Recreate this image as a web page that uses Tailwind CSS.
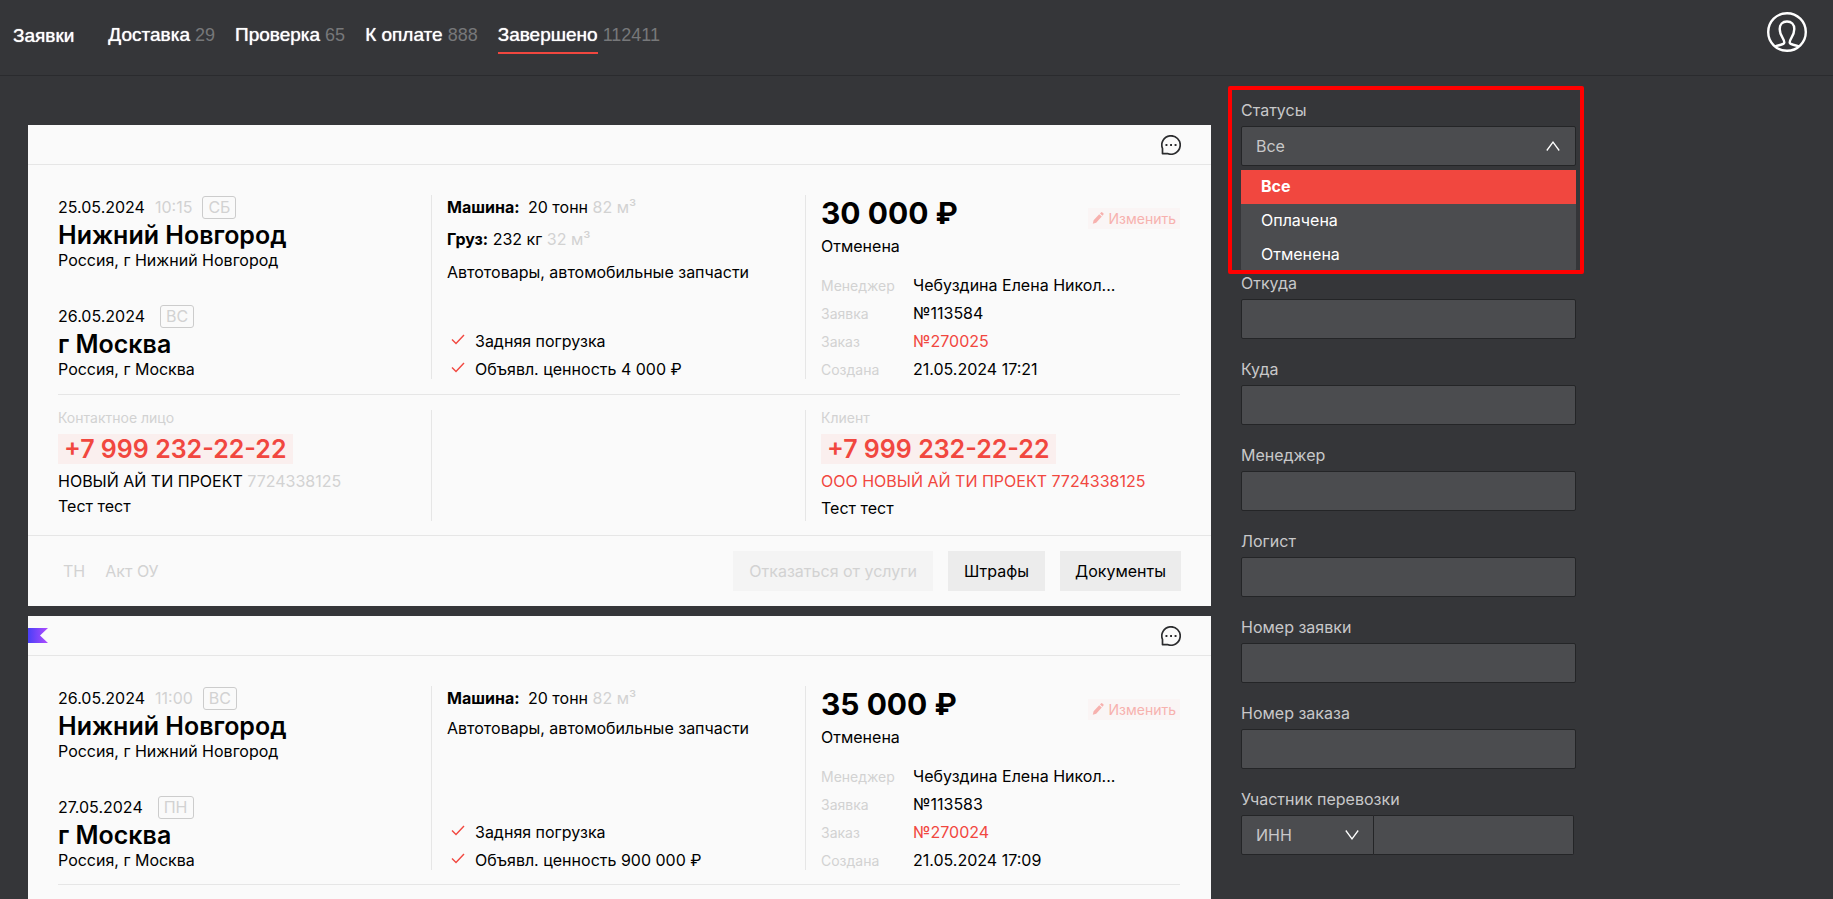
<!DOCTYPE html>
<html lang="ru">
<head>
<meta charset="utf-8">
<meta name="viewport" content="width=device-width, initial-scale=1">
<title>Заявки</title>
<script src="https://cdn.jsdelivr.net/npm/@tailwindcss/browser@4"></script>
</head>
<body class="bg-[#353639]">
<svg class="hidden" aria-hidden="true">
  <symbol id="chat" viewBox="0 0 20 20"><path d="M1.500 18.700V13.500A9.200 9.200 0 1 1 6.500 18.500Z" fill="none" stroke="#2b2c2e" stroke-width="1.700" stroke-linejoin="round"/><path d="M4.500 9.100h1.900v1.900H4.500zM9.100 9.100h1.900v1.900H9.100zM13.600 9.100h1.900v1.900h-1.900z" fill="#2b2c2e"/></symbol>
  <symbol id="check" viewBox="0 0 14 11"><path d="M1 5.5 5 9.5 13 1" fill="none" stroke="#f1473f" stroke-width="1.4"/></symbol>
  <symbol id="pencil" viewBox="0 0 12 12"><path d="M.8 11.800 1.600 8.200 7.200 2.200 9.800 4.600 4.200 10.800ZM8 1.400 9 .4a1 1 0 0 1 1.400 0L11.300 1.300a1 1 0 0 1 0 1.400L10.500 3.800Z" fill="#f7b1ae"/></symbol>
</svg>
<div class="flex h-screen flex-col overflow-hidden font-['Inter',sans-serif] text-base text-black">
  <header class="flex h-[76px] shrink-0 items-start justify-between border-b border-[#2a2b2e] pr-[26px] pl-[13px]">
    <div class="flex items-start gap-[34px] font-['Liberation_Sans',sans-serif] text-[19px] leading-[34px] text-white">
      <a href="#" class="mt-[19px] [text-shadow:0_0_1px_#fff]">Заявки</a>
      <nav class="mt-[18px] flex gap-5">
        <a href="#" class="flex gap-[5px]"><span class="h-9 [text-shadow:0_0_1px_#fff]">Доставка</span><span class="text-lg leading-[34px] text-[#77787a]">29</span></a>
        <a href="#" class="flex gap-[5px]"><span class="h-9 [text-shadow:0_0_1px_#fff]">Проверка</span><span class="text-lg leading-[34px] text-[#77787a]">65</span></a>
        <a href="#" class="flex gap-[5px]"><span class="h-9 [text-shadow:0_0_1px_#fff]">К оплате</span><span class="text-lg leading-[34px] text-[#77787a]">888</span></a>
        <a href="#" class="flex gap-[5px]"><span class="h-9 border-b-2 border-[#f1473f] [text-shadow:0_0_1px_#fff]">Завершено</span><span class="text-lg leading-[34px] text-[#77787a]">112411</span></a>
      </nav>
    </div>
    <button type="button" aria-label="Профиль" class="mt-3">
      <svg class="size-10" viewBox="0 0 40 40" fill="none" stroke="#fff" stroke-width="2.4"><circle cx="20" cy="20" r="18.8"/><path d="M8 34.500C11 33 17 33 17.300 30.500C17.500 27 12.700 24 12.700 17C12.700 12.500 15.500 9.500 20 9.500S27.300 12.500 27.300 17C27.300 24 22.500 27 22.700 30.500C23 33 29 33 32 34.500"/></svg>
    </button>
  </header>

  <div class="flex gap-[30px] pl-7">
    <main class="mt-[49px] flex w-full max-w-[1183px] flex-col gap-2.5">
      <article class="bg-[#fafafa]">
        <div class="flex h-10 items-center justify-end border-b border-[#e6e6e6] pr-[30px]">
          <button type="button" aria-label="Сообщения"><svg class="size-5"><use href="#chat"/></svg></button>
        </div>
        <div class="mt-[30px] mr-[31px] ml-[30px] grid grid-cols-3 border-b border-[#e6e6e6] pb-[15px]">
          <section class="flex h-46 flex-col justify-between border-r border-[#e6e6e6]">
            <div>
              <div class="flex h-6 items-center gap-2.5"><span>25.05.2024</span><span class="text-[#d2d2d2]">10:15</span><span class="rounded-[3px] border border-[#ccc] px-[5px] leading-[21px] text-[#d2d2d2]">СБ</span></div>
              <h2 class="text-[25px] leading-8 font-semibold">Нижний Новгород</h2>
              <p class="leading-[19px]">Россия, г Нижний Новгород</p>
            </div>
            <div>
              <div class="flex h-6 items-center gap-[15px]"><span>26.05.2024</span><span class="rounded-[3px] border border-[#ccc] px-[5px] leading-[21px] text-[#d2d2d2]">ВС</span></div>
              <h2 class="text-[25px] leading-8 font-semibold">г Москва</h2>
              <p class="leading-[19px]">Россия, г Москва</p>
            </div>
          </section>
          <section class="flex h-46 flex-col border-r border-[#e6e6e6] pl-[15px]">
            <p class="mb-1.5"><b class="mr-1 font-bold">Машина:</b> 20 тонн <span class="text-[#d2d2d2]">82 м³</span></p>
            <p class="mt-0.5 mb-[9px]"><b class="font-bold">Груз:</b> 232 кг <span class="text-[#d2d2d2]">32 м³</span></p>
            <p>Автотовары, автомобильные запчасти</p>
            <ul class="mt-auto flex flex-col gap-[9px] pl-1 leading-[19px]">
              <li class="flex gap-2.5"><svg class="mt-0.5 h-[11px] w-3.5"><use href="#check"/></svg>Задняя погрузка</li>
              <li class="flex gap-2.5"><svg class="mt-0.5 h-[11px] w-3.5"><use href="#check"/></svg>Объявл. ценность 4 000 ₽</li>
            </ul>
          </section>
          <section class="flex h-46 flex-col pl-[15px]">
            <div class="flex justify-between">
              <h3 class="text-3xl font-bold">30 000 ₽</h3>
              <button type="button" class="mt-[13px] flex h-[21px] items-center gap-1 bg-[#faf5f5] px-1 text-sm text-[#f7b1ae]"><svg class="mb-0.5 size-3"><use href="#pencil"/></svg>Изменить</button>
            </div>
            <p class="mt-[3px]">Отменена</p>
            <dl class="mt-auto grid grid-cols-[92px_1fr] gap-y-[9px] leading-[19px]">
              <dt class="text-sm leading-[19px] text-[#d2d2d2]">Менеджер</dt><dd>Чебуздина Елена Никол...</dd>
              <dt class="text-sm leading-[19px] text-[#d2d2d2]">Заявка</dt><dd>№113584</dd>
              <dt class="text-sm leading-[19px] text-[#d2d2d2]">Заказ</dt><dd><a href="#" class="text-[#f1473f]">№270025</a></dd>
              <dt class="text-sm leading-[19px] text-[#d2d2d2]">Создана</dt><dd>21.05.2024 17:21</dd>
            </dl>
          </section>
        </div>
        <div class="mr-[31px] ml-[30px] grid grid-cols-3 pt-[15px] pb-3.5 leading-5">
          <section class="h-[111px] border-r border-[#e6e6e6]">
            <h4 class="text-sm leading-4 text-[#d2d2d2]">Контактное лицо</h4>
            <a href="#" class="mt-2 block w-fit bg-[#faefee] px-1.5 text-[25px] leading-[30px] font-semibold text-[#f1473f]">+7 999 232-22-22</a>
            <p class="mt-[7px]">НОВЫЙ АЙ ТИ ПРОЕКТ <span class="text-[#d2d2d2]">7724338125</span></p>
            <p class="mt-[5px]">Тест тест</p>
          </section>
          <section class="h-[111px] border-r border-[#e6e6e6]"></section>
          <section class="h-[111px] pl-[15px]">
            <h4 class="text-sm leading-4 text-[#d2d2d2]">Клиент</h4>
            <a href="#" class="mt-2 block w-fit bg-[#faefee] px-1.5 text-[25px] leading-[30px] font-semibold text-[#f1473f]">+7 999 232-22-22</a>
            <p class="mt-[7px]"><a href="#" class="text-[#f1473f]">ООО НОВЫЙ АЙ ТИ ПРОЕКТ 7724338125</a></p>
            <p class="mt-[7px]">Тест тест</p>
          </section>
        </div>
        <footer class="flex items-center justify-between border-t border-[#e6e6e6] py-[15px] pr-[30px] pl-[35px]">
          <div class="flex gap-5 text-[#d2d2d2]"><span>ТН</span><span>Акт ОУ</span></div>
          <div class="flex gap-[15px]">
            <button type="button" disabled class="h-10 bg-[#f4f4f4] px-4 text-[#d2d2d2]">Отказаться от услуги</button>
            <button type="button" class="h-10 bg-[#ececec] px-4">Штрафы</button>
            <button type="button" class="h-10 bg-[#ececec] px-[15px]">Документы</button>
          </div>
        </footer>
      </article>

      <article class="bg-[#fafafa]">
        <div class="flex h-10 items-center justify-between border-b border-[#e6e6e6] pr-[30px]">
          <svg class="h-[15px] w-5" viewBox="0 0 20 15"><defs><linearGradient id="flag"><stop stop-color="#4a3ff7"/><stop offset="1" stop-color="#b04cff"/></linearGradient></defs><path d="M0 0h20l-8 7.500 8 7.500H0Z" fill="url(#flag)"/></svg>
          <button type="button" aria-label="Сообщения"><svg class="size-5"><use href="#chat"/></svg></button>
        </div>
        <div class="mt-[30px] mr-[31px] ml-[30px] grid grid-cols-3 border-b border-[#e6e6e6] pb-3.5">
          <section class="flex h-46 flex-col justify-between border-r border-[#e6e6e6]">
            <div>
              <div class="flex h-6 items-center gap-2.5"><span>26.05.2024</span><span class="text-[#d2d2d2]">11:00</span><span class="rounded-[3px] border border-[#ccc] px-[5px] leading-[21px] text-[#d2d2d2]">ВС</span></div>
              <h2 class="text-[25px] leading-8 font-semibold">Нижний Новгород</h2>
              <p class="leading-[19px]">Россия, г Нижний Новгород</p>
            </div>
            <div>
              <div class="flex h-6 items-center gap-[15px]"><span>27.05.2024</span><span class="rounded-[3px] border border-[#ccc] px-[5px] leading-[21px] text-[#d2d2d2]">ПН</span></div>
              <h2 class="text-[25px] leading-8 font-semibold">г Москва</h2>
              <p class="leading-[19px]">Россия, г Москва</p>
            </div>
          </section>
          <section class="flex h-46 flex-col border-r border-[#e6e6e6] pl-[15px]">
            <p class="mb-1.5"><b class="mr-1 font-bold">Машина:</b> 20 тонн <span class="text-[#d2d2d2]">82 м³</span></p>
            <p>Автотовары, автомобильные запчасти</p>
            <ul class="mt-auto flex flex-col gap-[9px] pl-1 leading-[19px]">
              <li class="flex gap-2.5"><svg class="mt-0.5 h-[11px] w-3.5"><use href="#check"/></svg>Задняя погрузка</li>
              <li class="flex gap-2.5"><svg class="mt-0.5 h-[11px] w-3.5"><use href="#check"/></svg>Объявл. ценность 900 000 ₽</li>
            </ul>
          </section>
          <section class="flex h-46 flex-col pl-[15px]">
            <div class="flex justify-between">
              <h3 class="text-3xl font-bold">35 000 ₽</h3>
              <button type="button" class="mt-[13px] flex h-[21px] items-center gap-1 bg-[#faf5f5] px-1 text-sm text-[#f7b1ae]"><svg class="mb-0.5 size-3"><use href="#pencil"/></svg>Изменить</button>
            </div>
            <p class="mt-[3px]">Отменена</p>
            <dl class="mt-auto grid grid-cols-[92px_1fr] gap-y-[9px] leading-[19px]">
              <dt class="text-sm leading-[19px] text-[#d2d2d2]">Менеджер</dt><dd>Чебуздина Елена Никол...</dd>
              <dt class="text-sm leading-[19px] text-[#d2d2d2]">Заявка</dt><dd>№113583</dd>
              <dt class="text-sm leading-[19px] text-[#d2d2d2]">Заказ</dt><dd><a href="#" class="text-[#f1473f]">№270024</a></dd>
              <dt class="text-sm leading-[19px] text-[#d2d2d2]">Создана</dt><dd>21.05.2024 17:09</dd>
            </dl>
          </section>
        </div>
        <div class="h-4"></div>
      </article>
    </main>

    <aside class="mt-[22px] w-[335px] shrink-0 text-[#c8c8c9]">
      <form class="flex flex-col gap-[18px]">
        <div class="relative -mb-[18px]">
          <label for="status" class="mb-1 block">Статусы</label>
          <div class="grid items-center">
            <select id="status" class="col-start-1 row-start-1 h-10 w-full appearance-none rounded-xs border border-[#242527] bg-[#4b4c4f] px-3.5"><option>Все</option></select>
            <svg class="pointer-events-none col-start-1 row-start-1 mr-4 h-2.5 w-3.5 justify-self-end" viewBox="0 0 14 10" fill="none" stroke="#fff" stroke-width="1.300"><path d="M.8 9.500 7 1.200 13.200 9.500"/></svg>
          </div>
          <ul role="listbox" aria-label="Статусы" class="mt-1 rounded-b-xs bg-[#4b4c4f] text-white">
            <li role="option" aria-selected="true" class="h-[34px] bg-[#f1473f] px-5 leading-8 font-bold">Все</li>
            <li role="option" aria-selected="false" class="h-[34px] px-5 leading-8">Оплачена</li>
            <li role="option" aria-selected="false" class="h-[33px] px-5 leading-8">Отменена</li>
          </ul>
          <div class="pointer-events-none absolute -top-3 -right-2 -bottom-[3px] -left-[13px] rounded-xs border-4 border-[#f00]"></div>
        </div>
        <div><label for="from" class="mb-1 block">Откуда</label><input id="from" type="text" class="block h-10 w-full rounded-xs border border-[#242527] bg-[#4b4c4f] px-[15px]"></div>
        <div><label for="to" class="mb-1 block">Куда</label><input id="to" type="text" class="block h-10 w-full rounded-xs border border-[#242527] bg-[#4b4c4f] px-[15px]"></div>
        <div><label for="manager" class="mb-1 block">Менеджер</label><input id="manager" type="text" class="block h-10 w-full rounded-xs border border-[#242527] bg-[#4b4c4f] px-[15px]"></div>
        <div><label for="logist" class="mb-1 block">Логист</label><input id="logist" type="text" class="block h-10 w-full rounded-xs border border-[#242527] bg-[#4b4c4f] px-[15px]"></div>
        <div><label for="request" class="mb-1 block">Номер заявки</label><input id="request" type="text" class="block h-10 w-full rounded-xs border border-[#242527] bg-[#4b4c4f] px-[15px]"></div>
        <div><label for="order" class="mb-1 block">Номер заказа</label><input id="order" type="text" class="block h-10 w-full rounded-xs border border-[#242527] bg-[#4b4c4f] px-[15px]"></div>
        <div>
          <label for="party" class="mb-1 block">Участник перевозки</label>
          <div class="mr-0.5 flex">
            <div class="grid w-[133px] shrink-0 items-center">
              <select aria-label="Тип поиска" class="col-start-1 row-start-1 h-10 w-full appearance-none rounded-l-xs border border-[#242527] bg-[#4b4c4f] px-3.5"><option>ИНН</option></select>
              <svg class="pointer-events-none col-start-1 row-start-1 mr-[15px] h-2.5 w-3.5 justify-self-end" viewBox="0 0 14 10" fill="none" stroke="#fff" stroke-width="1.300"><path d="M.8 .5 7 8.800 13.200 .5"/></svg>
            </div>
            <input id="party" type="text" class="block h-10 min-w-0 flex-1 rounded-r-xs border border-l-0 border-[#242527] bg-[#4b4c4f] px-[15px]">
          </div>
        </div>
      </form>
    </aside>
  </div>
</div>
</body>
</html>
